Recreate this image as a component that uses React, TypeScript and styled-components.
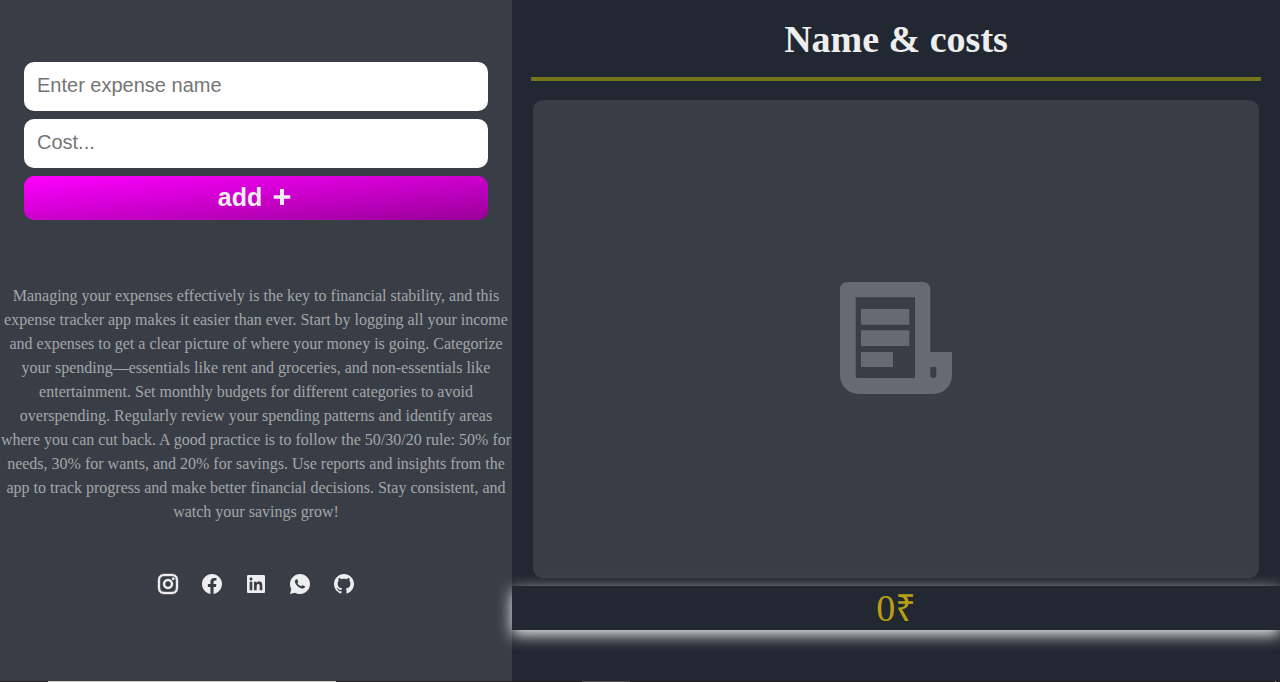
import React from "react";
import styled, { createGlobalStyle } from "styled-components";
import {
  RiInstagramLine,
  RiFacebookCircleFill,
  RiLinkedinBoxFill,
  RiWhatsappFill,
  RiGithubFill,
} from "react-icons/ri";

const GlobalStyle = createGlobalStyle`
  * { box-sizing: border-box; margin: 0; padding: 0; }
  body {
    background: #222831;
    color: #eeeeee;
    font-family: "Liberation Serif", "Times New Roman", serif;
  }
`;

const Page = styled.div`
  min-height: 100vh;
  display: flex;
  flex-direction: column;
`;

const Columns = styled.div`
  flex: 1;
  display: grid;
  grid-template-columns: 2fr 3fr;
`;

const Sidebar = styled.aside`
  background: #393e46;
  padding-top: 62px;
`;

const Form = styled.form`
  display: flex;
  flex-direction: column;
  gap: 8px;
  padding: 0 24px;
`;

const Field = styled.input`
  width: 100%;
  height: 49px;
  padding: 0 13px 2px;
  border: 0;
  border-radius: 10px;
  background: #ffffff;
  color: #222831;
  font: 20px "Liberation Sans", Arial, sans-serif;
  &::placeholder { color: #757575; opacity: 1; }
`;

const AddButton = styled.button`
  height: 44px;
  display: flex;
  align-items: center;
  justify-content: center;
  gap: 8px;
  padding-bottom: 2px;
  border: 0;
  border-radius: 10px;
  background: linear-gradient(to bottom right, #ff00ff, #990099);
  color: #eeeeee;
  font: bold 25px "Liberation Sans", Arial, sans-serif;
`;

const About = styled.p`
  margin-top: 64px;
  font-size: 16px;
  line-height: 24px;
  text-align: center;
  color: #a4a6a9;
`;

const Socials = styled.nav`
  display: flex;
  justify-content: center;
  gap: 20px;
  margin-top: 48px;
`;

const SocialLink = styled.a<{ $outlined: boolean }>`
  display: flex;
  color: #eeeeee;
  font-size: 24px;
  & path { stroke: currentColor; stroke-width: ${(p) => (p.$outlined ? 0.4 : 0)}; }
`;

const Main = styled.main`
  display: flex;
  flex-direction: column;
`;

const Title = styled.h1`
  margin: 0 19px;
  padding: 17px 0 16px;
  border-bottom: 4px solid #74741b;
  font-size: 38px;
  line-height: 44px;
  text-align: center;
`;

const ListPanel = styled.section`
  flex: 1;
  display: flex;
  align-items: center;
  justify-content: center;
  margin: 19px 21px 8px;
  padding-bottom: 2px;
  border-radius: 10px;
  background: #393e46;
  color: #676a72;
`;

const Total = styled.output`
  position: relative;
  display: block;
  height: 44px;
  margin-bottom: 51px;
  background: #222831;
  box-shadow: 0 5px 15px #eeeeee;
  color: #b8a012;
  font-size: 38px;
  line-height: 44px;
  text-align: center;
`;

const Currency = styled.span`
  font-family: "Open Sans", "Noto Sans", sans-serif;
  font-size: 36px;
  line-height: 1;
`;

const BottomEdge = styled.footer`
  display: flex;
  height: 1px;
  background: #1e1c20;
`;

const EdgeMark = styled.span<{ $start: number; $size: number; $tone: string }>`
  margin-left: ${(p) => p.$start}px;
  width: ${(p) => p.$size}px;
  background: ${(p) => p.$tone};
`;

const PlusIcon = () => (
  <svg width="24" height="24" viewBox="0 0 24 24" fill="currentColor" aria-hidden="true">
    <path d="M10 4h4v6.300h6.300v3.400H14V20h-4v-6.300H3.700v-3.400H10z" />
  </svg>
);

const ReceiptIcon = () => (
  <svg width="112" height="112" viewBox="0 0 112 112" fill="currentColor" aria-hidden="true">
    <path
      fillRule="evenodd"
      d="M8 0H82.500Q90.300 0 90.300 8V70H112V93.500A18.500 18.500 0 0 1 93.500 112H18.500A18.500 18.500 0 0 1 0 93.500V8Q0 0 8 0ZM15.700 15.300V94.500Q15.700 96 17.200 96H75V15.300ZM90.300 85V93.300Q90.300 96 93.300 96Q96.300 96 96.300 93.300V85Z"
    />
    <path d="M21 27h48.300v15.700H21zM21 48.300h48.300V64H21zM21 70h32v15H21z" />
  </svg>
);

const socials = [
  { name: "Instagram", Icon: RiInstagramLine, outlined: true },
  { name: "Facebook", Icon: RiFacebookCircleFill, outlined: false },
  { name: "LinkedIn", Icon: RiLinkedinBoxFill, outlined: false },
  { name: "WhatsApp", Icon: RiWhatsappFill, outlined: false },
  { name: "GitHub", Icon: RiGithubFill, outlined: false },
];

export default function App() {
  return (
    <Page>
      <GlobalStyle />
      <Columns>
        <Sidebar>
          <Form onSubmit={(e) => e.preventDefault()}>
            <Field type="text" placeholder="Enter expense name" aria-label="Expense name" />
            <Field type="text" inputMode="decimal" placeholder="Cost..." aria-label="Cost" />
            <AddButton type="submit">
              add
              <PlusIcon />
            </AddButton>
          </Form>
          <About>
            Managing your expenses effectively is the key to financial stability, and this expense
            tracker app makes it easier than ever. Start by logging all your income and expenses to
            get a clear picture of where your money is going. Categorize your spending—essentials
            like rent and groceries, and non-essentials like entertainment. Set monthly budgets for
            different categories to avoid overspending. Regularly review your spending patterns and
            identify areas where you can cut back. A good practice is to follow the 50/30/20 rule:
            50% for needs, 30% for wants, and 20% for savings. Use reports and insights from the app
            to track progress and make better financial decisions. Stay consistent, and watch your
            savings grow!
          </About>
          <Socials aria-label="Social links">
            {socials.map(({ name, Icon, outlined }) => (
              <SocialLink key={name} href="#" aria-label={name} $outlined={outlined}>
                <Icon />
              </SocialLink>
            ))}
          </Socials>
        </Sidebar>
        <Main>
          <Title>Name &amp; costs</Title>
          <ListPanel aria-label="Expenses">
            <ReceiptIcon />
          </ListPanel>
          <Total>
            0<Currency>₹</Currency>
          </Total>
        </Main>
      </Columns>
      <BottomEdge>
        <EdgeMark $start={48} $size={288} $tone="#c8c8c8" />
        <EdgeMark $start={246} $size={48} $tone="#4c4c4e" />
        <EdgeMark $start={645} $size={1} $tone="#b0b0b0" />
      </BottomEdge>
    </Page>
  );
}
